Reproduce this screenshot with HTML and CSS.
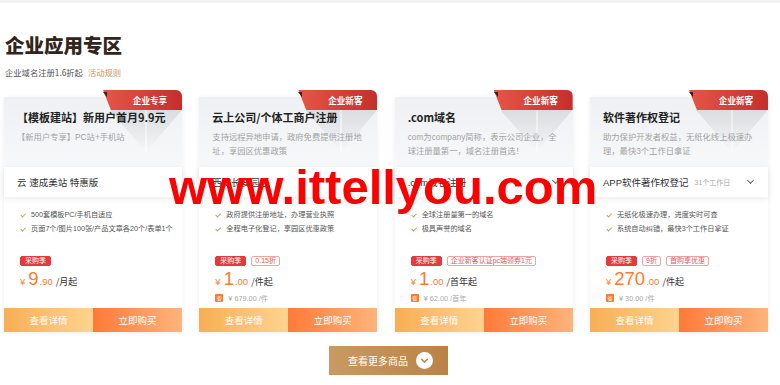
FILE: index.html
```html
<!DOCTYPE html>
<html lang="zh-CN">
<head>
<meta charset="utf-8">
<title>企业应用专区</title>
<link rel="stylesheet" href="styles.css">
</head>
<body>
<div class="topbar"></div>
<section class="zone">
  <h1 class="zone-title">企业应用专区</h1>
  <p class="zone-sub">企业域名注册1.6折起<a class="rule">活动规则</a></p>

  <div class="cards">
    <div class="card">
      <div class="badge"><span>企业专享</span></div>
      <div class="ribbon"></div>
      <div class="head">
        <h3 class="title">【模板建站】新用户首月9.9元</h3>
        <p class="desc"><span>【新用户专享】PC站+手机站</span></p>
      </div>
      <div class="select"><span>云 速成美站 特惠版</span></div>
      <ul class="feats">
        <li><i class="chk"></i>500套模板PC/手机自适应</li>
        <li><i class="chk"></i>页面7个/图片100张/产品文章各20个/表单1个</li>
      </ul>
      <div class="tags"><span class="tag solid">采购季</span></div>
      <div class="price"><span class="yen">¥</span><span class="big">9</span><span class="dec">.90</span><span class="unit">/月起</span></div>
      <div class="btns"><a class="b-detail">查看详情</a><a class="b-buy">立即购买</a></div>
    </div>

    <div class="card">
      <div class="badge"><span>企业新客</span></div>
      <div class="ribbon"></div>
      <div class="head">
        <h3 class="title">云上公司/个体工商户注册</h3>
        <p class="desc"><span>支持远程异地申请，政府免费提供注册地</span><span>址，享园区优惠政策</span></p>
      </div>
      <div class="select"><span>西安长安园区</span><i class="chev"></i></div>
      <ul class="feats">
        <li><i class="chk"></i>政府提供注册地址，办理营业执照</li>
        <li><i class="chk"></i>全程电子化登记，享园区优惠政策</li>
      </ul>
      <div class="tags"><span class="tag solid">采购季</span><span class="tag line">0.15折</span></div>
      <div class="price"><span class="yen">¥</span><span class="big">1</span><span class="dec">.00</span><span class="unit">/件起</span></div>
      <div class="save"><i class="sheng">省</i>¥ 679.00 /件</div>
      <div class="btns"><a class="b-detail">查看详情</a><a class="b-buy">立即购买</a></div>
    </div>

    <div class="card">
      <div class="badge"><span>企业新客</span></div>
      <div class="ribbon"></div>
      <div class="head">
        <h3 class="title">.com域名</h3>
        <p class="desc"><span>com为company简称，表示公司企业，全</span><span>球注册量第一，域名注册首选！</span></p>
      </div>
      <div class="select"><span>.com域名注册</span><i class="chev"></i></div>
      <ul class="feats">
        <li><i class="chk"></i>全球注册量第一的域名</li>
        <li><i class="chk"></i>极具声誉的域名</li>
      </ul>
      <div class="tags"><span class="tag solid">采购季</span><span class="tag line">企业新客认证pc端领券1元</span></div>
      <div class="price"><span class="yen">¥</span><span class="big">1</span><span class="dec">.00</span><span class="unit">/首年起</span></div>
      <div class="save"><i class="sheng">省</i>¥ 62.00 /首年</div>
      <div class="btns"><a class="b-detail">查看详情</a><a class="b-buy">立即购买</a></div>
    </div>

    <div class="card">
      <div class="badge"><span>企业新客</span></div>
      <div class="ribbon"></div>
      <div class="head">
        <h3 class="title">软件著作权登记</h3>
        <p class="desc"><span>助力保护开发者权益，无纸化线上极速办</span><span>理，最快3个工作日拿证</span></p>
      </div>
      <div class="select"><span>APP软件著作权登记</span><small>31个工作日</small><i class="chev"></i></div>
      <ul class="feats">
        <li><i class="chk"></i>无纸化极速办理，进度实时可查</li>
        <li><i class="chk"></i>系统自动纠错，最快3个工作日拿证</li>
      </ul>
      <div class="tags"><span class="tag solid">采购季</span><span class="tag line">9折</span><span class="tag line">首购享优惠</span></div>
      <div class="price"><span class="yen">¥</span><span class="big">270</span><span class="dec">.00</span><span class="unit">/件起</span></div>
      <div class="save"><i class="sheng">省</i>¥ 30.00 /件</div>
      <div class="btns"><a class="b-detail">查看详情</a><a class="b-buy">立即购买</a></div>
    </div>
  </div>

  <div class="more-wrap">
    <a class="more">查看更多商品<span class="more-ico"><svg viewBox="0 0 16 16" width="16" height="16"><path d="M4.5 6.5 L8 10 L11.5 6.5" fill="none" stroke="#c08a4f" stroke-width="2" stroke-linecap="round" stroke-linejoin="round"/></svg></span></a>
  </div>
</section>
<div class="watermark">www.ittellyou.com</div>
</body>
</html>
```
FILE: styles.css
```css
* { box-sizing: border-box; }
html, body { margin: 0; padding: 0; background: #fff; }
body {
  font-family: "Liberation Sans", "Noto Sans CJK SC", sans-serif;
  color: #333;
  width: 780px;
  height: 385px;
  overflow: hidden;
  position: relative;
}
.topbar { height: 3px; background: #f3f3f3; }
.zone { padding-top: 28px; }
.zone-title {
  margin: 0 0 0 5px;
  font-family: "Noto Sans CJK SC", sans-serif;
  font-size: 19.5px;
  line-height: 28px;
  font-weight: 900;
  color: #33251a;
}
.zone-sub {
  margin: 7px 0 0 5px;
  font-family: "Noto Sans CJK SC", sans-serif;
  font-size: 8.3px;
  line-height: 12px;
  color: #555;
}
.rule { color: #c9985f; margin-left: 5px; }

.cards {
  display: flex;
  gap: 17.33px;
  padding: 0 12px 0 4px;
  margin-top: 19px;
}
.card {
  position: relative;
  width: 178px;
  height: 235px;
  background: #fff;
  box-shadow: 0 1px 5px rgba(0,0,0,0.07);
  display: flex;
  flex-direction: column;
  font-family: "Liberation Sans", "Noto Sans CJK SC", sans-serif;
}
.badge {
  position: absolute;
  top: -7px;
  right: 0;
  width: 79px;
  height: 20px;
  z-index: 3;
}
.badge::before {
  content: "";
  position: absolute;
  inset: 0;
  background: linear-gradient(90deg, #e65647, #c52f2b);
  border-top-right-radius: 6px;
  clip-path: polygon(0 0, 100% 0, 100% 100%, 10% 100%);
}
.badge::after {
  content: "";
  position: absolute;
  left: 0;
  top: 2px;
  width: 0;
  height: 0;
  border-left: 4px solid transparent;
  border-top: 5px solid #4a1a14;
}
.badge span {
  position: relative;
  display: block;
  padding-left: 15px;
  text-align: center;
  line-height: 20px;
  color: #fff;
  font-size: 8.6px;
  font-weight: 700;
  font-family: "Noto Sans CJK SC", sans-serif;
}
.ribbon {
  position: absolute;
  top: 13px;
  right: 0;
  width: 72px;
  height: 42px;
  background:
    linear-gradient(90deg, rgba(255,255,255,0) 48%, rgba(255,255,255,0.7) 50%, rgba(255,255,255,0) 52%),
    linear-gradient(180deg, rgba(0,0,0,0.09), rgba(0,0,0,0.0));
  clip-path: polygon(0 0, 100% 0, 50% 100%);
  z-index: 1;
}
.head {
  height: 70px;
  padding: 13px 13px 0;
  background: linear-gradient(180deg, #eef0f3, #f7f8fa);
  position: relative;
}
.title {
  position: relative;
  z-index: 2;
  margin: 0;
  font-family: "Noto Sans CJK SC", sans-serif;
  font-size: 11px;
  line-height: 14px;
  font-weight: 700;
  color: #222;
  white-space: nowrap;
}
.desc {
  position: relative;
  z-index: 2;
  margin: 6px 0 0;
  font-size: 8.3px;
  line-height: 14px;
  color: #a3a3a3;
  white-space: nowrap;
}
.desc span { display: block; }
.select {
  height: 30px;
  display: flex;
  align-items: center;
  padding: 0 13px;
  background: #fff;
  box-shadow: 0 2px 7px rgba(0,0,0,0.08);
  font-size: 9.5px;
  color: #333;
  position: relative;
  z-index: 2;
  white-space: nowrap;
}
.select small {
  font-size: 7px;
  color: #aaa;
  margin-left: 6px;
}
.chev {
  margin-left: auto;
  width: 5px;
  height: 5px;
  border-right: 1px solid #666;
  border-bottom: 1px solid #666;
  transform: translateY(-2px) rotate(45deg);
  margin-right: 2px;
}
.feats {
  list-style: none;
  margin: 0;
  padding: 11px 8px 0 17px;
}
.feats li {
  font-size: 7.2px;
  line-height: 14px;
  color: #555;
  display: flex;
  align-items: center;
  white-space: nowrap;
}
.chk {
  width: 3px;
  height: 5px;
  border-right: 1px solid #c9985f;
  border-bottom: 1px solid #c9985f;
  transform: rotate(45deg) translateY(-1px);
  margin-right: 7px;
  flex: none;
}
.tags {
  display: flex;
  gap: 5px;
  padding: 0 0 0 16px;
  margin-top: 20px;
}
.tag {
  height: 10px;
  line-height: 8px;
  font-size: 7px;
  padding: 0 3px;
  border-radius: 2px;
  border: 1px solid #e53a3d;
  white-space: nowrap;
}
.tag.solid { background: #e53a3d; color: #fff; padding: 0 4px; }
.tag.line { background: #fff; color: #e3575a; border-color: #f2a2a2; }
.price {
  display: flex;
  align-items: baseline;
  padding-left: 16px;
  height: 22px;
  margin-top: 1px;
  font-family: "Liberation Sans", sans-serif;
  color: #ff7a30;
}
.yen { font-size: 9.5px; margin-right: 3px; }
.big { font-size: 18.5px; line-height: 23px; }
.dec { font-size: 9.5px; margin-left: 1px; }
.unit { font-size: 9px; color: #333; margin-left: 3px; font-family: "Noto Sans CJK SC", sans-serif; }
.save {
  display: flex;
  align-items: center;
  padding-left: 16px;
  margin-top: 4px;
  height: 10px;
  font-size: 7.3px;
  color: #aaa;
}
.sheng {
  font-style: normal;
  width: 8px;
  height: 8px;
  background: #ff7a30;
  color: #fff;
  font-size: 5px;
  line-height: 8px;
  text-align: center;
  margin-right: 5px;
  border-radius: 1px;
}
.btns {
  margin-top: auto;
  display: flex;
  height: 24px;
}
.btns a {
  flex: 1;
  display: flex;
  align-items: center;
  justify-content: center;
  color: #fff;
  font-size: 9.5px;
  font-family: "Noto Sans CJK SC", sans-serif;
}
.b-detail { background: linear-gradient(90deg, #f8ae54, #fed38f); }
.b-buy { background: linear-gradient(90deg, #ff7a38, #ffb47c); }

.more-wrap {
  display: flex;
  justify-content: center;
  margin-top: 14px;
}
.more {
  width: 119px;
  height: 29px;
  margin-left: -3px;
  display: flex;
  align-items: center;
  justify-content: center;
  background: linear-gradient(90deg, #c99a63, #bb8246);
  color: #fff;
  font-size: 10px;
  font-family: "Noto Sans CJK SC", sans-serif;
  padding-left: 4px;
}
.more-ico {
  width: 17px;
  height: 17px;
  border-radius: 50%;
  background: #fff;
  display: flex;
  align-items: center;
  justify-content: center;
  margin-left: 8px;
}
.more-ico svg { width: 13px; height: 13px; }

.watermark {
  position: absolute;
  left: 169px;
  top: 163px;
  color: #ff0000;
  font-family: "Liberation Sans", sans-serif;
  font-weight: 700;
  font-size: 49px;
  line-height: 49px;
  z-index: 10;
  white-space: nowrap;
}
```
